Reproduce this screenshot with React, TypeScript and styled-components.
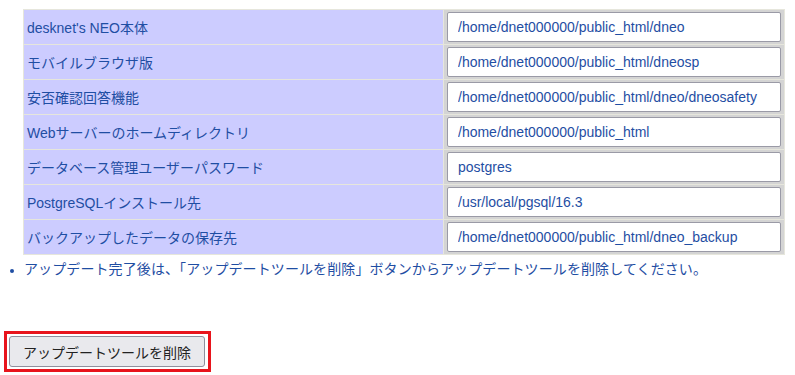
import styled, { createGlobalStyle } from "styled-components";

const GlobalStyle = createGlobalStyle`
  body {
    margin: 0;
    background: #ffffff;
    font-family: "Liberation Sans", "Noto Sans CJK JP", sans-serif;
  }
`;

const Page = styled.div`
  padding: 9px 0 0 0;
`;

const SettingsTable = styled.table`
  margin-left: 23px;
  width: 762px;
  border-collapse: separate;
  border-spacing: 1px;
  background: #e6e6dc;
`;

const LabelCell = styled.td`
  width: 416px;
  height: 34px;
  padding: 0 0 0 3px;
  background: #ccccff;
  color: #1f4ea3;
  font-size: 14px;
  vertical-align: middle;
`;

const ValueCell = styled.td`
  padding: 0 3px;
  background: #d4d4d4;
  vertical-align: middle;
`;

const PathInput = styled.input`
  box-sizing: border-box;
  display: block;
  width: 100%;
  height: 30px;
  padding: 0 10px;
  border: 1px solid #9a9aa6;
  border-radius: 2px;
  background: #ffffff;
  color: #1f4ea3;
  font-family: inherit;
  font-size: 14px;
`;

const Notes = styled.ul`
  margin: 5px 0 0 0;
  padding: 0 0 0 24px;
  color: #1f4ea3;
  font-size: 14px;
  line-height: 18px;
  letter-spacing: 0.1px;

  li::marker {
    font-size: 12px;
  }
`;

const ButtonFrame = styled.div`
  display: inline-block;
  margin: 53px 0 0 4px;
  padding: 2px 3px 2px 2px;
  border: 3px solid #e8141c;
`;

const DeleteButton = styled.button`
  display: block;
  height: 31px;
  padding: 0 13px;
  border: 1px solid #8f8f9d;
  border-radius: 3px;
  background: #e9e9ed;
  color: #222222;
  font-family: inherit;
  font-size: 14px;
`;

const rows: [string, string][] = [
  ["desknet's NEO本体", "/home/dnet000000/public_html/dneo"],
  ["モバイルブラウザ版", "/home/dnet000000/public_html/dneosp"],
  ["安否確認回答機能", "/home/dnet000000/public_html/dneo/dneosafety"],
  ["Webサーバーのホームディレクトリ", "/home/dnet000000/public_html"],
  ["データベース管理ユーザーパスワード", "postgres"],
  ["PostgreSQLインストール先", "/usr/local/pgsql/16.3"],
  ["バックアップしたデータの保存先", "/home/dnet000000/public_html/dneo_backup"],
];

export default function App() {
  return (
    <Page>
      <GlobalStyle />
      <SettingsTable>
        <tbody>
          {rows.map(([label, value]) => (
            <tr key={label}>
              <LabelCell>{label}</LabelCell>
              <ValueCell>
                <PathInput type="text" defaultValue={value} />
              </ValueCell>
            </tr>
          ))}
        </tbody>
      </SettingsTable>
      <Notes>
        <li>アップデート完了後は、「アップデートツールを削除」ボタンからアップデートツールを削除してください。</li>
      </Notes>
      <ButtonFrame>
        <DeleteButton type="button">アップデートツールを削除</DeleteButton>
      </ButtonFrame>
    </Page>
  );
}
